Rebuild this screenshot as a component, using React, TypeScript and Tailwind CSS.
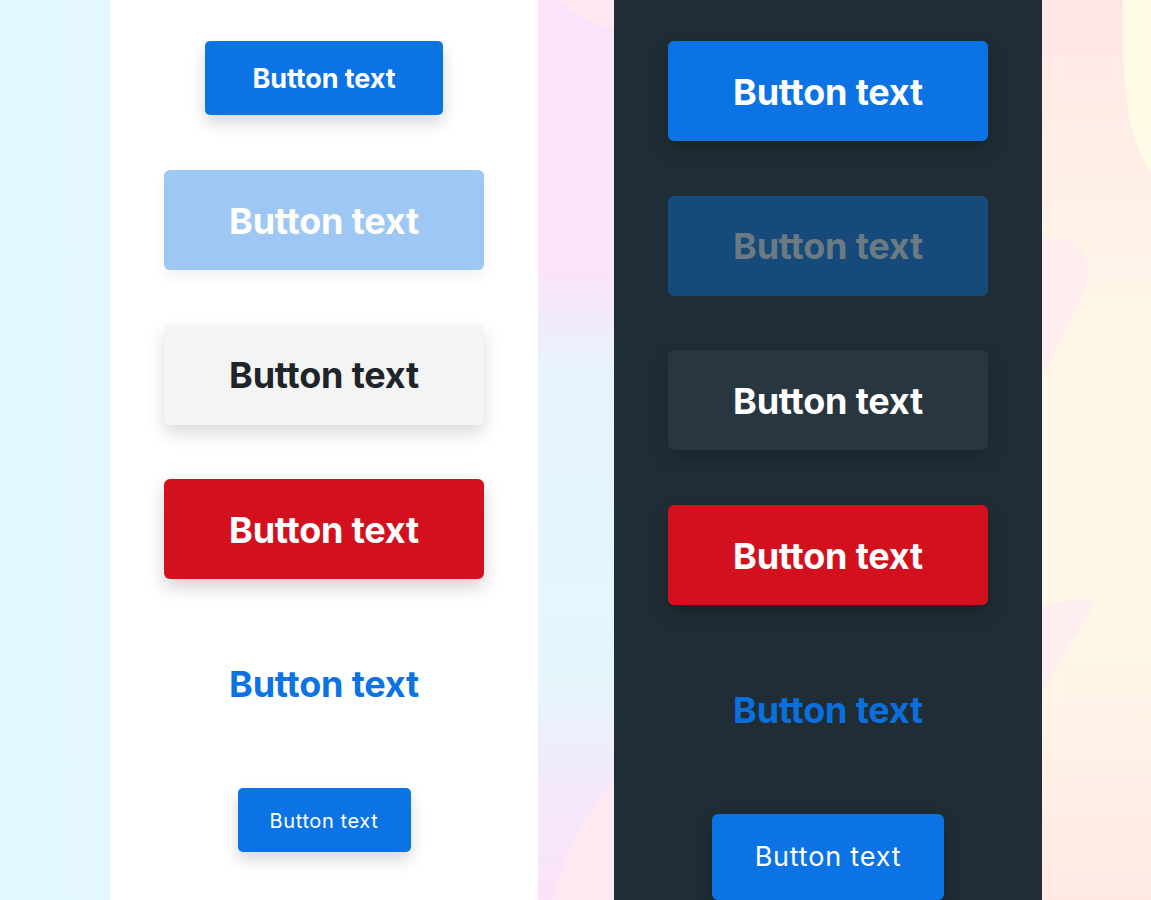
import React from "react";

const font = { fontFamily: "Inter, 'Noto Sans', sans-serif" };

function Backdrop() {
  return (
    <svg
      className="absolute inset-0 h-full w-full"
      viewBox="0 0 1151 900"
      preserveAspectRatio="none"
      aria-hidden
    >
      <defs>
        <linearGradient id="lstrip" x1="0" x2="1" y1="0" y2="0">
          <stop offset="0" stopColor="#e4f8ff" />
          <stop offset="1" stopColor="#e3f2fc" />
        </linearGradient>
        <linearGradient id="mstrip" x1="0" x2="0" y1="0" y2="1">
          <stop offset="0" stopColor="#fbe4fb" />
          <stop offset="0.3" stopColor="#fbe3f9" />
          <stop offset="0.42" stopColor="#e6f4fd" />
          <stop offset="0.75" stopColor="#e4f6fb" />
          <stop offset="0.88" stopColor="#f4e8fb" />
          <stop offset="1" stopColor="#fbe3f9" />
        </linearGradient>
        <linearGradient id="rstrip" x1="0" x2="0" y1="0" y2="1">
          <stop offset="0" stopColor="#ffe6e6" />
          <stop offset="0.35" stopColor="#fff7e8" />
          <stop offset="0.7" stopColor="#fff8e8" />
          <stop offset="1" stopColor="#ffe9e4" />
        </linearGradient>
      </defs>
      <rect x="0" y="0" width="1151" height="900" fill="url(#lstrip)" />
      <rect x="530" y="0" width="100" height="900" fill="url(#mstrip)" />
      <path d="M557 0 C 575 14, 595 24, 620 32 L 620 0 Z" fill="#ffe8f0" />
      <path d="M552 900 C 567 850, 592 800, 620 772 L 620 900 Z" fill="#fee9f0" />
      <rect x="1030" y="0" width="121" height="900" fill="url(#rstrip)" />
      <path d="M1123 0 L 1151 0 L 1151 172 C 1135 150, 1123 110, 1123 40 Z" fill="#fffbe6" />
      <path d="M1040 238 C 1070 236, 1092 245, 1087 280 C 1080 305, 1060 340, 1040 380 Z" fill="#ffedf0" />
      <path d="M1040 608 C 1060 600, 1085 597, 1094 601 C 1085 625, 1060 660, 1040 695 Z" fill="#ffeef0" />
    </svg>
  );
}

export default function App() {
  return (
    <div className="relative h-[900px] w-[1151px] overflow-hidden" style={font}>
      <Backdrop />
      <div className="relative flex h-full">
        <div className="w-[110px] shrink-0" />
        {/* Light panel */}
        <div className="flex w-[428px] shrink-0 flex-col items-center bg-white pt-[41px]">
          <button className="flex h-[74px] w-[238px] items-center justify-center rounded-[5px] bg-[#0b73e4] pt-[3px] text-[27px] font-bold tracking-[-0.1px] text-white shadow-[0_8px_16px_rgba(0,0,0,0.16)]">
            Button text
          </button>
          <button className="mt-[55px] flex h-[100px] w-[320px] items-center justify-center rounded-[6px] bg-[#9ec7f3] pt-[1px] text-[36px] font-bold tracking-[-0.2px] text-white shadow-[0_6px_14px_rgba(0,0,0,0.06)]">
            Button text
          </button>
          <button className="mt-[55px] flex h-[100px] w-[320px] items-center justify-center rounded-[6px] bg-[#f3f4f4] text-[36px] font-bold tracking-[-0.2px] text-[#1f2428] shadow-[0_8px_18px_rgba(0,0,0,0.15)]">
            Button text
          </button>
          <button className="mt-[54px] flex h-[100px] w-[320px] items-center justify-center rounded-[6px] bg-[#d3111e] pt-[1px] text-[36px] font-bold tracking-[-0.2px] text-white shadow-[0_8px_18px_rgba(0,0,0,0.18)]">
            Button text
          </button>
          <button className="mt-[55px] flex h-[100px] w-[320px] items-center justify-center text-[36px] font-bold tracking-[-0.2px] text-[#0b73e4]">
            Button text
          </button>
          <button className="mt-[54px] flex h-[64px] w-[173px] items-center justify-center rounded-[5px] bg-[#0b73e4] pt-[2px] text-[20px] font-normal tracking-[0.6px] text-white shadow-[0_8px_16px_rgba(0,0,0,0.16)]">
            Button text
          </button>
        </div>
        <div className="w-[76px] shrink-0" />
        {/* Dark panel */}
        <div className="flex w-[428px] shrink-0 flex-col items-center bg-[#1f2e36] pt-[41px]">
          <button className="flex h-[100px] w-[320px] items-center justify-center rounded-[6px] bg-[#0b73e4] pt-[1px] text-[36px] font-bold tracking-[-0.2px] text-white shadow-[0_8px_18px_rgba(0,0,0,0.25)]">
            Button text
          </button>
          <button className="mt-[55px] flex h-[100px] w-[320px] items-center justify-center rounded-[6px] bg-[#164a7a] text-[36px] font-bold tracking-[-0.2px] text-[#6c7a84]">
            Button text
          </button>
          <button className="mt-[54px] flex h-[100px] w-[320px] items-center justify-center rounded-[6px] bg-[#28373f] pt-[1px] text-[36px] font-bold tracking-[-0.2px] text-white shadow-[0_8px_18px_rgba(0,0,0,0.2)]">
            Button text
          </button>
          <button className="mt-[55px] flex h-[100px] w-[320px] items-center justify-center rounded-[6px] bg-[#d3111e] pt-[1px] text-[36px] font-bold tracking-[-0.2px] text-white shadow-[0_8px_18px_rgba(0,0,0,0.25)]">
            Button text
          </button>
          <button className="mt-[55px] flex h-[100px] w-[320px] items-center justify-center text-[36px] font-bold tracking-[-0.2px] text-[#0b6fdc]">
            Button text
          </button>
          <button className="mt-[54px] flex h-[86px] w-[232px] shrink-0 items-center justify-center rounded-[6px] bg-[#0b73e4] text-[27px] font-normal tracking-[0.8px] text-white shadow-[0_8px_18px_rgba(0,0,0,0.25)]">
            Button text
          </button>
        </div>
        <div className="flex-1" />
      </div>
    </div>
  );
}
